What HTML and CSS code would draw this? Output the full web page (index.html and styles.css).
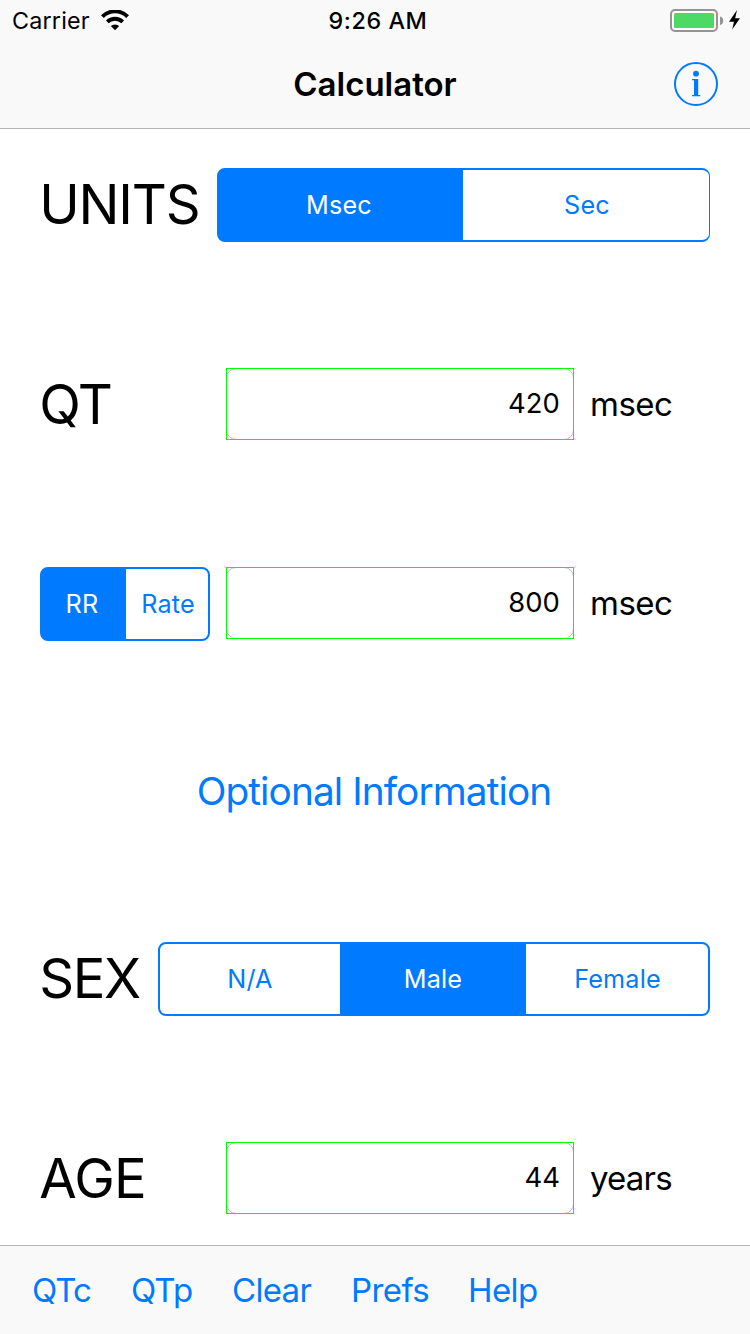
FILE: index.html
```html
<!DOCTYPE html>
<html lang="en">
<head>
<meta charset="utf-8">
<title>Calculator</title>
<link rel="stylesheet" href="styles.css">
</head>
<body>
<div class="screen">
  <header class="header">
    <div class="status">
      <div class="status-left">
        <span class="carrier">Carrier</span>
        <svg class="wifi" width="28" height="21" viewBox="0 0 28 21">
          <path d="M1.4 6.6 A17.8 17.8 0 0 1 26.6 6.6" fill="none" stroke="#000" stroke-width="4"/>
          <path d="M6.3 11.9 A11 11 0 0 1 21.7 11.9" fill="none" stroke="#000" stroke-width="3.8"/>
          <path d="M14 20.3 L9.8 16.1 A6 6 0 0 1 18.2 16.1 Z"/>
        </svg>
      </div>
      <span class="time">9:26 AM</span>
      <svg class="battery" width="72" height="24" viewBox="0 0 72 24">
        <rect x="1" y="2" width="46" height="21" rx="4" fill="#fff" stroke="#949496" stroke-width="2"/>
        <rect x="4" y="5" width="40" height="15" rx="1.5" fill="#4cd964"/>
        <path d="M50 8.5 A4.4 4.4 0 0 1 50 17 Z" fill="#949496"/>
        <path d="M67 2 L59 13.8 H64 L62.2 21.5 L70 10.3 H65.2 Z"/>
      </svg>
    </div>
    <div class="navbar">
      <h1 class="title">Calculator</h1>
      <svg class="info" width="44" height="44" viewBox="0 0 44 44">
        <circle cx="22" cy="22" r="21" fill="none" stroke="#007aff" stroke-width="2"/>
        <circle cx="22" cy="11.7" r="2.9" fill="#007aff"/>
        <path d="M18 17 H24.2 V33 H26.2 V34.2 H18 V33 H20 V18.2 H18 Z" fill="#007aff"/>
      </svg>
    </div>
  </header>

  <main class="form">
    <div class="row row-units">
      <span class="label label-units">UNITS</span>
      <div class="segments segments-units">
        <span class="segment active">Msec</span><span class="segment">Sec</span>
      </div>
    </div>
    <div class="row row-field">
      <span class="label label-wide label-qt">QT</span>
      <div class="field"><span class="value">420</span></div>
      <span class="unit">msec</span>
    </div>
    <div class="row row-rate">
      <div class="segments segments-rate">
        <span class="segment active">RR</span><span class="segment">Rate</span>
      </div>
      <div class="field"><span class="value">800</span></div>
      <span class="unit">msec</span>
    </div>
    <h2 class="optional">Optional Information</h2>
    <div class="row row-sex">
      <span class="label label-sex">SEX</span>
      <div class="segments segments-sex">
        <span class="segment">N/A</span><span class="segment active">Male</span><span class="segment last">Female</span>
      </div>
    </div>
    <div class="row row-field">
      <span class="label label-wide label-age">AGE</span>
      <div class="field"><span class="value">44</span></div>
      <span class="unit unit-years">years</span>
    </div>
  </main>

  <footer class="toolbar">
    <span class="action action-qtc">QTc</span>
    <span class="action action-qtp">QTp</span>
    <span class="action action-clear">Clear</span>
    <span class="action action-prefs">Prefs</span>
    <span class="action action-help">Help</span>
  </footer>
</div>
</body>
</html>
```
FILE: styles.css
```css
* { box-sizing: border-box; }
body { margin: 0; background: #fff; color: #000; font-family: Inter, "Liberation Sans", sans-serif; }
.screen { width: 750px; height: 1334px; display: flex; flex-direction: column; overflow: hidden; }
svg { display: block; flex: none; }

.header { height: 129px; background: #f9f9f9; border-bottom: 1px solid #b2b2b2; }
.status { height: 40px; display: grid; grid-template-columns: 251px 1fr 251px; align-items: center; }
.status-left { display: flex; align-items: center; padding-left: 12px; }
.carrier { width: 89px; font-size: 23.3px; letter-spacing: 0.2px; }
.time { text-align: center; font-size: 23.3px; font-weight: 500; letter-spacing: 0.6px; padding-left: 6px; }
.battery { justify-self: end; margin-right: 8px; }
.navbar { height: 88px; display: grid; grid-template-columns: 76px 1fr 76px; align-items: center; }
.title { grid-column: 2; margin: 0; text-align: center; font-size: 33px; font-weight: 600; letter-spacing: 0; }

.form { flex: 1; display: flex; flex-direction: column; padding: 39px 40px 0; }
.row { display: flex; align-items: center; height: 74px; flex: none; }
.row-field { height: 72px; margin-top: 126px; }
.row-rate { margin-top: 127px; align-items: flex-start; }
.row-sex { margin-top: 126px; }
.label { margin-left: -0.7px; font-size: 54.4px; line-height: 72px; white-space: nowrap; flex: none; }
.label-units { width: 177.7px; padding-bottom: 2px; letter-spacing: -1.2px; }
.label-sex { width: 118.7px; padding-bottom: 2px; letter-spacing: -1.4px; }
.label-wide { width: 186.7px; }
.label-qt { letter-spacing: -1.6px; }
.label-age { letter-spacing: -0.8px; }

.segments { display: grid; height: 74px; border: 2px solid #007aff; border-radius: 8px; background: #007aff; overflow: hidden; }
.segments-units { width: 493px; grid-template-columns: 244px 1fr; border-right-width: 1px; }
.segments-rate { width: 170px; grid-template-columns: 84px 1fr; margin-right: 16px; }
.segments-sex { width: 552px; grid-template-columns: 180px 186px 1fr; }
.segment { display: flex; align-items: center; justify-content: center; background: #fff; color: #007aff; font-size: 25.2px; letter-spacing: 0.2px; }
.segment:last-child { padding-left: 2px; }
.segment.last { padding-left: 1px; }
.active { background: #007aff; color: #fff; }
.active:first-child { padding-right: 4px; }

/* Square validation outline drawn over the rounded gray field border */
.field { position: relative; width: 348px; height: 72px; flex: none; }
.field::after { content: ""; position: absolute; inset: 0; border: 1px solid #00ff00; }
.value { display: block; height: 72px; border: 1px solid #bbb; border-radius: 10px; background: #fff; padding-right: 13px; text-align: right; font-size: 27.4px; line-height: 69px; letter-spacing: 0.1px; }
.unit { margin-left: 16px; font-size: 33px; line-height: 72px; letter-spacing: -0.5px; }
.unit-years { letter-spacing: -0.8px; }
.optional { margin: 117px 0 0; height: 58px; line-height: 66px; text-align: center; font-size: 38.8px; font-weight: 400; letter-spacing: -0.92px; padding-right: 2px; color: #007aff; }

.toolbar { height: 89px; border-top: 1px solid #b2b2b2; background: #f9f9f9; display: flex; align-items: center; padding-left: 32px; }
.action { color: #007aff; font-size: 33px; white-space: nowrap; letter-spacing: -0.6px; }
.action-qtc { width: 99px; letter-spacing: -1px; }
.action-qtp { width: 101px; letter-spacing: -0.9px; }
.action-clear { width: 119px; letter-spacing: -0.7px; }
.action-prefs { width: 117px; }
```
